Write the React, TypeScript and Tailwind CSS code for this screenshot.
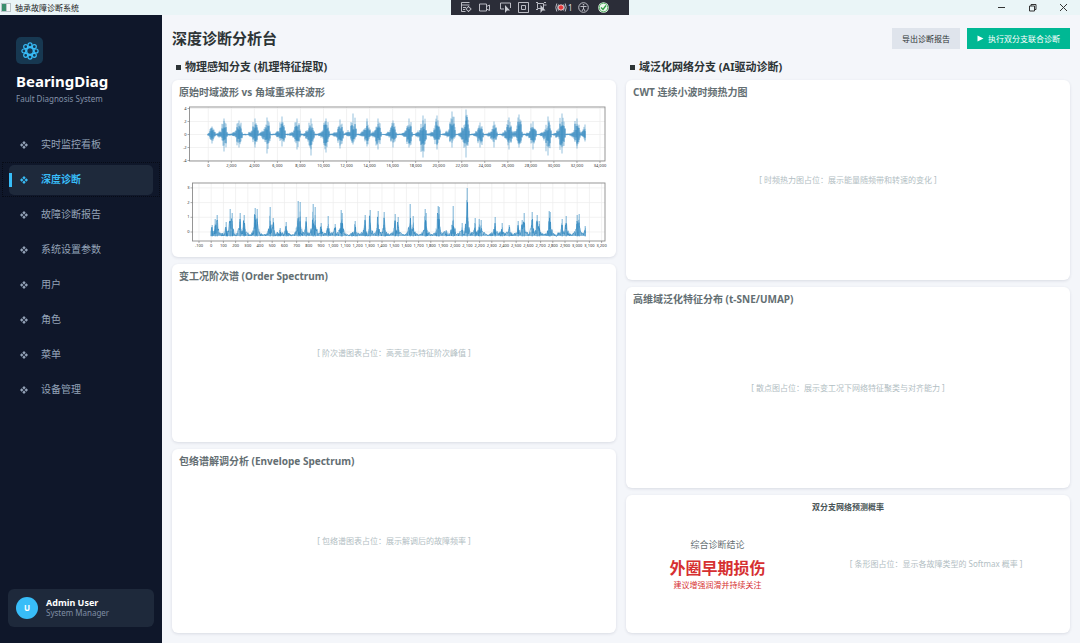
import React, { useState } from 'react';
import clsx from 'clsx';

const NAV_ITEMS = ['实时监控看板', '深度诊断', '故障诊断报告', '系统设置参数', '用户', '角色', '菜单', '设备管理'];

// burst position, peak above zero, peak below zero
const BURSTS = [
  [33, 8, 9], [45, 16, 17], [60, 14, 13], [76, 16, 13], [88, 17, 19], [103, 18, 12], [118, 16, 15],
  [132, 16, 21], [147, 16, 18], [161, 15, 14], [174, 21, 10], [188, 16, 12], [199, 16, 15], [214, 14, 13],
  [230, 16, 13], [244, 19, 23], [258, 19, 15], [273, 23, 13], [287, 25, 23], [301, 12, 13], [315, 13, 13],
  [330, 17, 15], [340, 20, 13], [354, 13, 15], [369, 18, 21], [383, 21, 19], [398, 16, 14], [406, 10, 7],
];

// envelope peak position and height over the noise floor
const PEAKS = [
  [33, 12], [36, 18], [38, 22], [47, 15], [51, 28], [53, 24], [61, 24], [65, 22], [76, 29], [78, 28], [91, 30],
  [94, 19], [101, 9], [107, 15], [119, 36], [121, 35], [127, 20], [134, 33], [136, 30], [142, 14], [149, 21],
  [156, 13], [162, 27], [163, 24], [176, 16], [186, 22], [191, 27], [199, 26], [205, 25], [216, 23], [219, 20],
  [231, 33], [234, 21], [246, 28], [247, 24], [259, 31], [260, 30], [267, 7], [274, 31], [283, 14], [288, 49],
  [296, 19], [300, 18], [302, 17], [316, 20], [323, 14], [330, 12], [339, 16], [343, 17], [345, 24], [353, 25],
  [358, 22], [360, 16], [370, 26], [371, 25], [383, 18], [387, 21], [398, 22], [400, 23], [406, 11],
];

const createRandom = (seed: number) => () => {
  seed = (seed * 16807) % 2147483647;
  return seed / 2147483647;
};

const buildWave = () => {
  const rnd = createRandom(77);
  let light = '';
  let dark = '';
  for (let x = 29; x <= 406.5; x += 1) {
    let up = 1;
    let down = 1;
    BURSTS.forEach(([cx, u, d]) => {
      const dist = x - cx;
      let w = 0;
      if (dist < -2) w = 0.4 * Math.max(0, 1 + (dist + 2) / 7);
      else if (dist < 3) w = 0.85;
      else if (dist < 4) w = 0.35;
      up = Math.max(up, u * w);
      down = Math.max(down, d * w);
    });
    const a = up * (0.4 + rnd() * 0.6);
    const b = down * (0.4 + rnd() * 0.6);
    const core = 0.5 + rnd() * 0.4;
    light += `M${x} ${(30.5 - a).toFixed(1)}V${(30.5 + b).toFixed(1)}`;
    dark += `M${x} ${(30.5 - a * core).toFixed(1)}V${(30.5 + b * core).toFixed(1)}`;
  }
  BURSTS.forEach(([cx, u, d]) => {
    light += `M${cx} ${30.5 - u}V${30.5 + d}`;
  });
  return { light, dark };
};

const buildEnvelope = () => {
  const rnd = createRandom(41);
  let light = '';
  let dark = 'M32 56';
  for (let x = 32; x <= 406.5; x += 0.5) {
    let h = 0;
    PEAKS.forEach(([cx, p]) => {
      const dist = Math.abs(x - cx);
      if (dist < 1) h = Math.max(h, p * 0.75);
      else h = Math.max(h, p * 0.5 * Math.max(0, 1 - dist / 4), 6 * Math.max(0, 1 - dist / 8));
    });
    const v = h * rnd();
    dark += `L${x} ${(56.5 - v - rnd()).toFixed(1)}`;
    light += `M${x} 56V${(56 - h * (0.4 + rnd() * 0.6)).toFixed(1)}`;
  }
  PEAKS.forEach(([cx, p]) => {
    light += `M${cx} 56.5V${57 - p}M${cx + 0.4} 56.5V${57 - p}`;
  });
  return { light, dark };
};

const wave = buildWave();
const envelope = buildEnvelope();

interface PlotProps {
  label: string;
  left: number;
  bottom: number;
  lineWidth: number;
  xTicks: { x: number; text: string }[];
  yTicks: { y: number; text: string }[];
  data: { light: string; dark: string };
}

const Plot: React.FC<PlotProps> = ({ label, left, bottom, lineWidth, xTicks, yTicks, data }) => (
  <svg viewBox="0 0 430 70" role="img" aria-label={label} className="block w-full">
    {xTicks.map(t => <path key={t.text} d={`M${t.x} 3V${bottom}`} stroke="#ececec" strokeWidth="0.7" />)}
    {yTicks.map(t => <path key={t.text} d={`M${left} ${t.y}H426`} stroke="#ececec" strokeWidth="0.7" />)}
    <path d={data.light} fill="none" stroke="#2b84bd" strokeWidth={lineWidth} opacity="0.5" />
    <path d={data.dark} fill="none" stroke="#2b84bd" strokeWidth={lineWidth} opacity="0.85" />
    <rect x={left} y="3" width={426 - left} height={bottom - 3} fill="none" stroke="#8c8c8c" strokeWidth="0.9" />
    {xTicks.map(t => (
      <g key={t.text}>
        <path d={`M${t.x} ${bottom}v2`} stroke="#777" strokeWidth="0.6" />
        <text x={t.x} y={bottom + 6} textAnchor="middle" fill="#333" className="text-[4px]">{t.text}</text>
      </g>
    ))}
    {yTicks.map(t => (
      <g key={t.text}>
        <path d={`M${left} ${t.y}h-2`} stroke="#777" strokeWidth="0.6" />
        <text x={left - 3} y={t.y + 1} textAnchor="end" fill="#333" className="text-[4px]">{t.text}</text>
      </g>
    ))}
  </svg>
);

const waveX = Array.from({ length: 18 }, (_, i) => ({ x: 29.3 + i * 23.04, text: (i * 2000).toLocaleString('en-US') }));
const waveY = [4, 2, 0, -2, -4].map(v => ({ y: 30.5 - v * 6.5, text: String(v) }));
const envX = Array.from({ length: 34 }, (_, i) => ({ x: 20 + i * 12.2, text: ((i - 1) * 100).toLocaleString('en-US') }));
const envY = [3, 2, 1, 0].map(v => ({ y: 52 - v * 14.7, text: String(v) }));

const Card: React.FC<{ title: string; children: React.ReactNode }> = ({ title, children }) => (
  <section className="flex min-h-0 flex-col rounded-md bg-white px-[7px] py-[6px] shadow-[0_1px_3px_rgba(30,40,70,0.12)]">
    <h3 className="h-3 text-[10px] leading-3 font-bold text-[#636e72]">{title}</h3>
    {children}
  </section>
);

const Placeholder: React.FC<{ text: string }> = ({ text }) => (
  <div className="flex flex-1 items-center justify-center pb-3 text-[8px] text-[#b2bec3]">{text}</div>
);

const BearingIcon: React.FC = () => (
  <svg viewBox="0 0 18 18" fill="none" stroke="#38bdf8" strokeWidth="1.2" className="size-[18px]">
    <circle cx="9" cy="9" r="3.4" strokeWidth="1.5" />
    {Array.from({ length: 8 }, (_, i) => (
      <circle key={i} cx={9 + 6.1 * Math.cos((i * Math.PI) / 4)} cy={9 + 6.1 * Math.sin((i * Math.PI) / 4)} r="2" />
    ))}
  </svg>
);

const DebugToolbar: React.FC = () => (
  <div className="flex h-[15px] w-[178px] items-center bg-[#2b2d38] pl-2">
    <svg viewBox="0 0 160 15" fill="none" stroke="#c9cbd2" strokeWidth="0.9" className="h-[15px] w-40">
      <path d="M2.5 2.5h8M2.5 5h8M2.5 2.5v9h4M4 7.5h3M4 9.5h2" />
      <circle cx="9.5" cy="9" r="2" />
      <path d="M9.5 6v1M9.5 11v1M6.5 9h1M11.5 9h1" />
      <path d="M20.5 4h7v7h-7zM27.5 6.5l3-1.5v5.5l-3-1.5" />
      <path d="M45 9h-3.5V3h10v5" />
      <path d="M46 5v8l2-2.5h3z" fill="#c9cbd2" stroke="none" />
      <path d="M59.5 2.5h10v10h-10zM62.5 5.5h4v4h-4z" />
      <path d="M78.5 3.5h6v5h-6zM77 2.5h2M85 2.5h2M77 9.5h2M84.5 5h3" />
      <path d="M81.5 5v8l2-2.5h3z" fill="#c9cbd2" stroke="none" />
      <circle cx="102" cy="7.5" r="2.7" fill="#e5383b" stroke="#fff" strokeWidth="0.7" />
      <path d="M99.5 4.5q-1.8 3 0 6M104.5 4.5q1.8 3 0 6M97.8 3.5q-2 4 0 8M106.2 3.5q2 4 0 8" />
      <text x="109" y="10.5" fill="#dcdde2" stroke="none" className="text-[8px]">1</text>
      <circle cx="124.5" cy="7.5" r="4.8" />
      <circle cx="124.5" cy="4.8" r="0.8" fill="#c9cbd2" stroke="none" />
      <path d="M121.5 6.5h6M124.5 6.5v2.5M124.5 8.5l-1.5 2.5M124.5 8.5l1.5 2.5" />
      <circle cx="144.5" cy="7.5" r="5.3" fill="#eef7ee" stroke="none" />
      <circle cx="144.5" cy="7.5" r="4.3" stroke="#3fa652" />
      <path d="M142 7.5l2 2 3-4" stroke="#2f9e44" strokeWidth="1.3" />
    </svg>
  </div>
);

const TitleBar: React.FC = () => (
  <header className="grid h-[15px] shrink-0 grid-cols-[1fr_auto_1fr] items-center bg-[#eaf5f7]">
    <div className="flex items-center gap-1 pl-px text-[8px] leading-3 text-[#1b1b1b]">
      <svg viewBox="0 0 10 9" className="h-[9px] w-[10px]">
        <path d="M0 0h10v9H0z" fill="#b9c4c8" />
        <path d="M1 1h4v7H1z" fill="#3a8f6e" />
        <path d="M6 1h3v7H6z" fill="#f6f8f8" />
      </svg>
      轴承故障诊断系统
    </div>
    <DebugToolbar />
    <div className="flex justify-end gap-5 pr-[11px]">
      <button aria-label="最小化"><svg viewBox="0 0 11 11" className="size-[11px]"><path d="M2 5.5h7" stroke="#333" /></svg></button>
      <button aria-label="还原">
        <svg viewBox="0 0 11 11" fill="none" stroke="#333" className="size-[11px]"><path d="M2.5 4h5v5h-5zM4 4V2.5h5V7.5H7.5" /></svg>
      </button>
      <button aria-label="关闭"><svg viewBox="0 0 11 11" className="size-[11px]"><path d="M2 2l7 7M9 2l-7 7" stroke="#333" /></svg></button>
    </div>
  </header>
);

const Sidebar: React.FC = () => {
  const [active, setActive] = useState('深度诊断');

  return (
    <aside className="flex w-[162px] shrink-0 flex-col bg-[#0f172a]">
      <div className="px-4 pt-[22px]">
        <div className="flex size-[27px] items-center justify-center rounded-[5px] bg-[#173851]"><BearingIcon /></div>
        <h1 className="mt-[7px] text-[15px] leading-5 font-bold text-white">BearingDiag</h1>
        <p className="mt-[2px] text-[8px] leading-3 text-[#8492a9]">Fault Diagnosis System</p>
      </div>
      <nav className="mt-[22px] flex flex-col px-[2px]">
        {NAV_ITEMS.map(item => {
          const isActive = item === active;
          return (
            <button
              key={item}
              onClick={() => setActive(item)}
              className={clsx('flex h-[35px] items-center border border-dotted px-[6px] text-[10px]', isActive ? 'border-[#070b16]' : 'border-transparent')}
            >
              <span className={clsx('flex h-[30px] flex-1 items-center rounded-[5px]', isActive ? 'bg-[#1e293b] font-bold text-[#38bdf8]' : 'text-[#94a3b8]')}>
                <span className={clsx('h-[14px] w-[3px]', isActive && 'bg-[#38bdf8]')} />
                <svg viewBox="0 0 8 8" className="mr-[13px] ml-2 size-2" fill="currentColor">
                  <path d="M4 0l1.7 1.7L4 3.4 2.3 1.7zM4 4.6l1.7 1.7L4 8 2.3 6.3zM1.7 2.3L3.4 4 1.7 5.7 0 4zM6.3 2.3L8 4 6.3 5.7 4.6 4z" />
                </svg>
                {item}
              </span>
            </button>
          );
        })}
      </nav>
      <div className="mx-2 mt-auto mb-4 flex h-[38px] items-center gap-2 rounded-md bg-[#1e293b] px-2">
        <span className="flex size-[22px] items-center justify-center rounded-full bg-[#38bdf8] text-[8px] font-bold text-white">U</span>
        <div>
          <p className="text-[9px] leading-[10px] font-bold text-white">Admin User</p>
          <p className="text-[8px] leading-[10px] text-[#7f8da4]">System Manager</p>
        </div>
      </div>
    </aside>
  );
};

const App: React.FC = () => (
  <div className="flex min-h-screen flex-col bg-[#f4f6fa] font-['Noto_Sans','Noto_Sans_CJK_SC',sans-serif]">
    <TitleBar />
    <div className="flex flex-1">
      <Sidebar />
      <main className="flex min-w-0 flex-1 flex-col px-[10px] pt-[13px] pb-[10px]">
        <div className="flex h-[21px] items-center gap-[7px]">
          <h2 className="mr-auto text-[15px] font-bold text-[#2d3436]">深度诊断分析台</h2>
          <button className="h-[21px] bg-[#dfe4ec] px-[10px] text-[8px] text-[#2d3436]">导出诊断报告</button>
          <button className="flex h-[21px] items-center gap-1 bg-[#00b894] px-[10px] text-[8px] text-white">
            <svg viewBox="0 0 7 7" className="size-[7px]"><path d="M0.5 0.5L6.5 3.5 0.5 6.5z" fill="#fff" /></svg>
            执行双分支联合诊断
          </button>
        </div>
        <div className="mt-[10px] grid flex-1 grid-cols-2 gap-[10px]">
          <div className="flex flex-col">
            <h3 className="mb-[5px] flex h-4 items-center gap-1 pl-1 text-[11px] leading-4 font-bold text-[#2d3436]">
              <span className="size-[5px] bg-[#2d3436]" />物理感知分支 (机理特征提取)
            </h3>
            <div className="grid flex-1 grid-rows-[177fr_178fr_184fr] gap-[7px]">
              <Card title="原始时域波形 vs 角域重采样波形">
                <div className="mt-[6px] flex flex-col gap-[6px]">
                  <Plot label="原始时域波形" left={10.5} bottom={57} lineWidth={1} xTicks={waveX} yTicks={waveY} data={wave} />
                  <Plot label="角域重采样波形" left={13.5} bottom={61} lineWidth={0.7} xTicks={envX} yTicks={envY} data={envelope} />
                </div>
              </Card>
              <Card title="变工况阶次谱 (Order Spectrum)"><Placeholder text="[ 阶次谱图表占位：高亮显示特征阶次峰值 ]" /></Card>
              <Card title="包络谱解调分析 (Envelope Spectrum)"><Placeholder text="[ 包络谱图表占位：展示解调后的故障频率 ]" /></Card>
            </div>
          </div>
          <div className="flex flex-col">
            <h3 className="mb-[5px] flex h-4 items-center gap-1 pl-1 text-[11px] leading-4 font-bold text-[#2d3436]">
              <span className="size-[5px] bg-[#2d3436]" />域泛化网络分支 (AI驱动诊断)
            </h3>
            <div className="grid flex-1 grid-rows-[200fr_201fr_138fr] gap-[7px]">
              <Card title="CWT 连续小波时频热力图"><Placeholder text="[ 时频热力图占位：展示能量随频带和转速的变化 ]" /></Card>
              <Card title="高维域泛化特征分布 (t-SNE/UMAP)"><Placeholder text="[ 散点图占位：展示变工况下网络特征聚类与对齐能力 ]" /></Card>
              <section className="flex flex-col rounded-md bg-white px-[7px] py-[6px] shadow-[0_1px_3px_rgba(30,40,70,0.12)]">
                <h3 className="h-3 text-center text-[8px] leading-3 font-bold text-[#4a5557]">双分支网络预测概率</h3>
                <div className="grid flex-1 grid-cols-[2fr_3fr] gap-[7px]">
                  <div className="flex flex-col items-center justify-center pb-3">
                    <p className="text-[9px] leading-4 text-[#636e72]">综合诊断结论</p>
                    <p className="mt-1 text-[16px] leading-[22px] font-bold text-[#d63031]">外圈早期损伤</p>
                    <p className="text-[8px] leading-3 text-[#d63031]">建议增强润滑并持续关注</p>
                  </div>
                  <Placeholder text="[ 条形图占位：显示各故障类型的 Softmax 概率 ]" />
                </div>
              </section>
            </div>
          </div>
        </div>
      </main>
    </div>
  </div>
);

export default App;
